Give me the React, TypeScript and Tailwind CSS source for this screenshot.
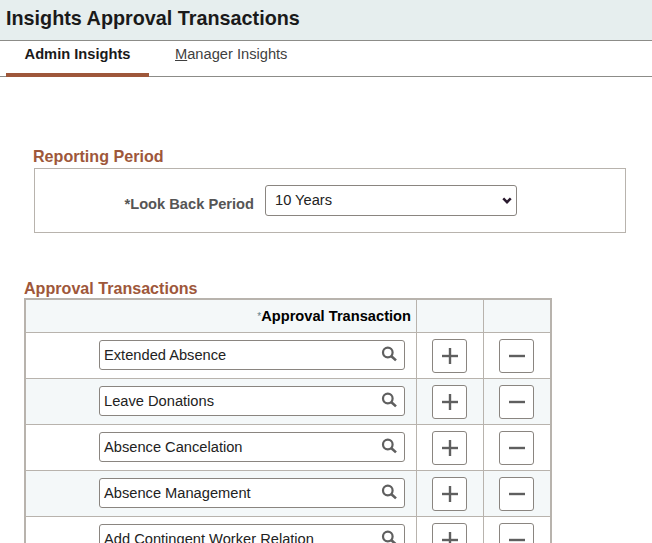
import React from 'react';

const rows = [
  'Extended Absence',
  'Leave Donations',
  'Absence Cancelation',
  'Absence Management',
  'Add Contingent Worker Relation',
];

const SearchIcon: React.FC = () => (
  <svg className="w-[16px] h-[16px] shrink-0 -mt-[1px]" viewBox="0 0 16 16" fill="none" stroke="#5f5f5f" strokeWidth={2.2}>
    <circle cx="6.8" cy="6.5" r="4.8" />
    <path d="M10.4 10.2 L15 14.4" strokeWidth={2.6} />
  </svg>
);

const IconButton: React.FC<{ plus?: boolean }> = ({ plus = false }) => (
  <button className="w-[35px] h-[34px] bg-white border border-[#8a8580] rounded-[3px] flex items-center justify-center">
    <svg className="w-[22px] h-[22px]" viewBox="0 0 22 22" stroke="#5f5f5f" strokeWidth={2.4}>
      <path d="M3 11 H19" />
      {plus && <path d="M11 3 V19" />}
    </svg>
  </button>
);

const App: React.FC = () => {
  return (
    <div className="w-[652px] h-[543px] overflow-hidden bg-white font-['Liberation_Sans',Arial,sans-serif]">
      {/* Page title */}
      <div className="h-[41px] bg-[#e6eeee] border-b border-[#8c8c88] pl-[6px] pb-[2px] flex items-center">
        <h1 className="text-[19.8px] font-bold text-[#1a1a1a]">Insights Approval Transactions</h1>
      </div>

      {/* Tabs */}
      <div className="h-[36px] border-b border-[#8c8c88] pl-[6px] flex">
        <div className="w-[143px] h-[36px] border-b-4 border-[#9e573a] flex justify-center pt-[5px]">
          <span className="text-[14.67px] leading-[17px] font-bold text-[#1a1a1a]">Admin Insights</span>
        </div>
        <div className="ml-[26px] pt-[5px] text-[14.67px] leading-[17px] text-[#3f3f3f]">
          <span className="underline">M</span>anager Insights
        </div>
      </div>

      {/* Reporting period */}
      <div className="ml-[33px] mt-[70px] text-[16.1px] leading-[19px] font-bold text-[#9e573a]">Reporting Period</div>
      <div className="ml-[34px] mt-[2px] w-[592px] h-[65px] border border-[#b8b3ad] flex items-center">
        <span className="w-[219px] text-right text-[14.67px] font-bold text-[#555555] mt-[6px]">*Look Back Period</span>
        <div className="ml-[11px] w-[252px] h-[31px] border border-[#8a8580] rounded-[3px] flex items-center justify-between pl-[9px] pr-[4px]">
          <span className="text-[14.67px] text-[#222222] -mt-[1px]">10 Years</span>
          <svg className="w-[10px] h-[7px]" viewBox="0 0 12 8" fill="none" stroke="#2a1a2e" strokeWidth={3}>
            <path d="M1.5 1.5 L6 6 L10.5 1.5" />
          </svg>
        </div>
      </div>

      {/* Approval transactions */}
      <div className="ml-[24px] mt-[46px] text-[16.1px] leading-[19px] font-bold text-[#9e573a]">Approval Transactions</div>
      <div className="ml-[24px] w-[528px] border-t-2 border-x-2 border-[#b8b3ad]">
        <div className="h-[33px] bg-[#f4f8f9] flex border-b border-[#b8b3ad]">
          <div className="w-[390px] flex items-center justify-end pr-[5px] text-[14.67px] font-bold text-black">
            <span className="text-[10px] font-normal text-[#5f7f8c]">*</span>Approval Transaction
          </div>
          <div className="w-[67px] border-l border-[#b8b3ad]" />
          <div className="flex-1 border-l border-[#b8b3ad]" />
        </div>
        {rows.map((name, i) => (
          <div key={name} className={`h-[46px] flex border-b border-[#b8b3ad] ${i % 2 === 1 ? 'bg-[#f4f8f9]' : 'bg-white'}`}>
            <div className="w-[390px] flex items-center pl-[73px]">
              <div className="w-[306px] h-[30px] -mt-[2px] bg-white border border-[#8a8580] rounded-[3px] flex items-center justify-between pl-[4px] pr-[7px]">
                <span className="text-[14.67px] text-[#222222]">{name}</span>
                <SearchIcon />
              </div>
            </div>
            <div className="w-[67px] border-l border-[#b8b3ad] flex items-center justify-center pr-[1px]">
              <IconButton plus />
            </div>
            <div className="flex-1 border-l border-[#b8b3ad] flex items-center justify-center pr-[1px]">
              <IconButton />
            </div>
          </div>
        ))}
      </div>
    </div>
  );
};

export default App;
